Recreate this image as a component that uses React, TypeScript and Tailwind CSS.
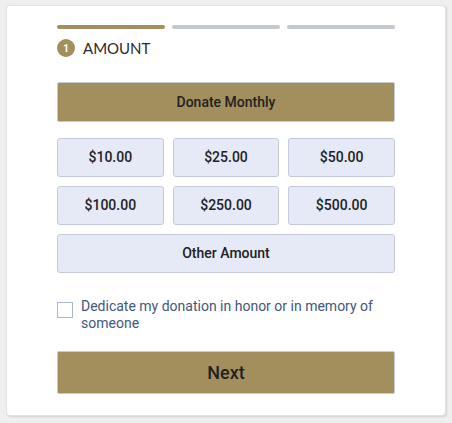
const amounts = ['$10.00', '$25.00', '$50.00', '$100.00', '$250.00', '$500.00'];

export default function App() {
  return (
    <div className="min-h-[423px] bg-[#efefef] pt-[5px] pl-[6px] font-['Roboto',sans-serif]">
      <div className="w-[440px] h-[411px] rounded-[4px] border border-[#e0e1e4] bg-white px-[50px] pt-[19px] shadow-[1px_1px_2px_rgba(0,0,0,0.12)]">
        {/* Progress */}
        <div className="flex gap-[7px]">
          <div className="h-[4px] flex-1 rounded-full bg-[#a38f5e]"></div>
          <div className="h-[4px] flex-1 rounded-full bg-[#c3c8d0]"></div>
          <div className="h-[4px] flex-1 rounded-full bg-[#c3c8d0]"></div>
        </div>

        <div className="mt-[10px] flex h-[18px] items-center gap-[8px]">
          <span className="flex h-[18px] w-[18px] items-center justify-center rounded-full bg-[#a38f5e] text-[10px] font-bold text-white">
            1
          </span>
          <span className="font-['Lato',sans-serif] text-[15px] leading-[18px] text-[#2a2a2a]">AMOUNT</span>
        </div>

        <button className="mt-[25px] flex h-[40px] w-full items-center justify-center rounded-[2px] border border-[#c4c9d6] bg-[#a38f5e] text-[14px] font-medium text-[#222]">
          Donate Monthly
        </button>

        <div className="mt-[16px] grid grid-cols-3 gap-[9px]">
          {amounts.map((a) => (
            <button
              key={a}
              className="flex h-[39px] items-center justify-center rounded-[3px] border border-[#c4c9dc] bg-[#e6e9f6] text-[14px] font-medium text-[#222]"
            >
              {a}
            </button>
          ))}
          <button className="col-span-3 flex h-[39px] items-center justify-center rounded-[3px] border border-[#c4c9dc] bg-[#e6e9f6] text-[14px] font-medium text-[#222]">
            Other Amount
          </button>
        </div>

        <label className="mt-[25px] flex items-start gap-[8px]">
          <span className="mt-[4px] h-[16px] w-[16px] shrink-0 border border-[#a9b8cc] bg-white"></span>
          <span className="text-[14px] leading-[17px] text-[#42587c]">
            Dedicate my donation in honor or in memory of someone
          </span>
        </label>

        <button className="mt-[19px] flex h-[43px] w-full items-center justify-center rounded-[2px] border border-[#c4c9d6] bg-[#a38f5e] text-[18px] font-medium text-[#222]">
          Next
        </button>
      </div>
    </div>
  );
}
